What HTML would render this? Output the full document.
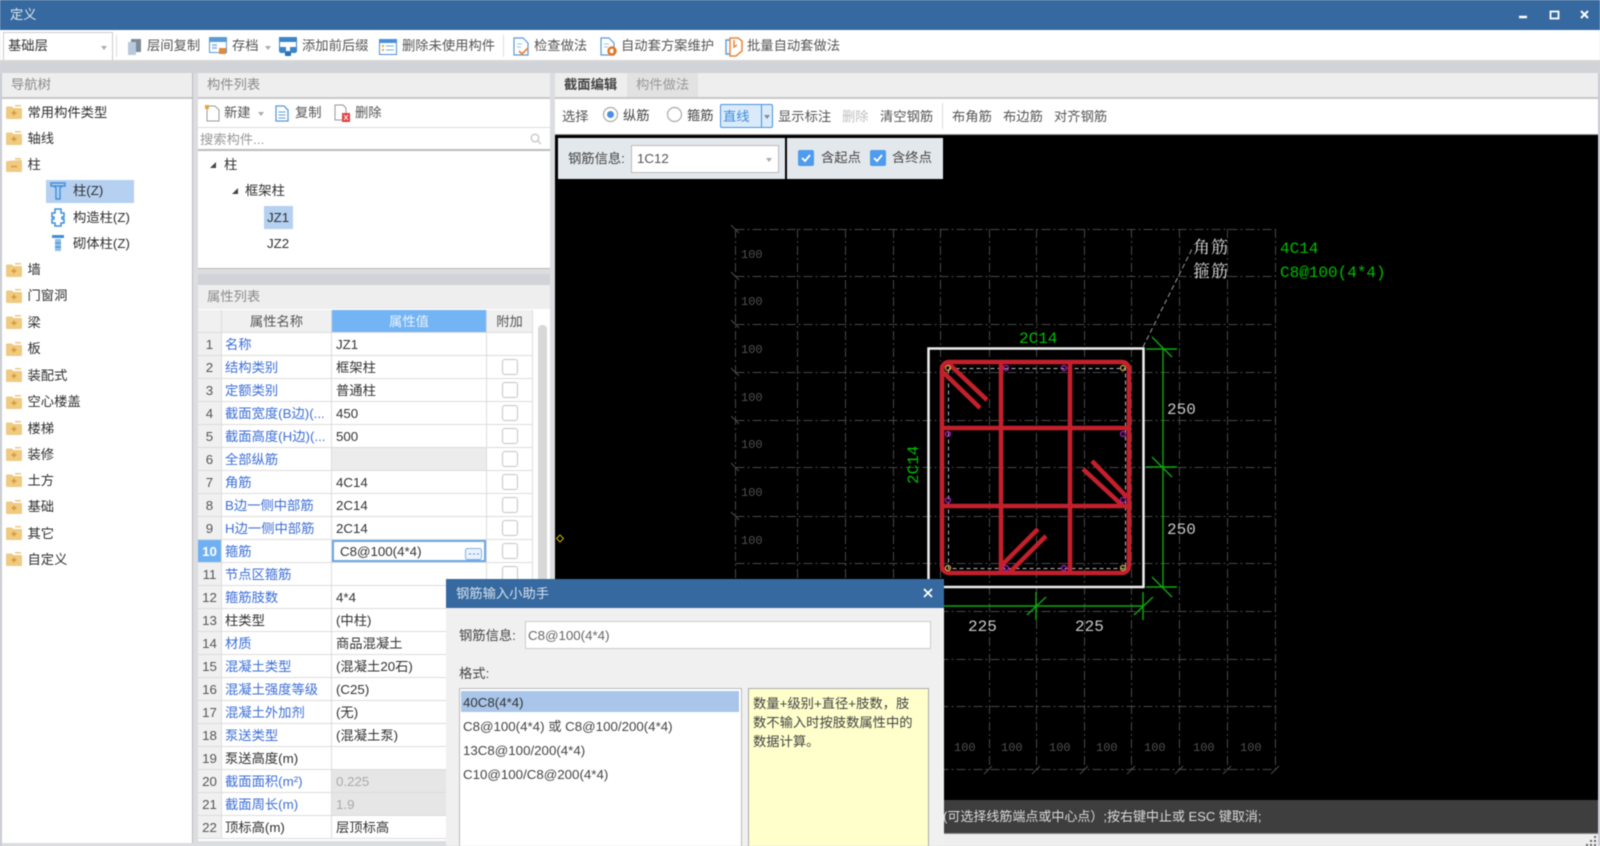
<!DOCTYPE html>
<html lang="zh"><head><meta charset="utf-8"><title>定义</title>
<style>
html,body{margin:0;padding:0;width:1600px;height:846px;overflow:hidden;background:#dcdde0}
body{font-family:"Liberation Sans","Noto Sans CJK SC",sans-serif;font-size:13.3px;color:#303030;position:relative}
#w{position:absolute;left:0;top:0;width:1600px;height:846px;overflow:hidden;filter:blur(.4px)}
.b{position:absolute}
.t{position:absolute;white-space:nowrap;line-height:18px;transform:translateY(-50%)}
.i{position:absolute;overflow:visible}
.g{color:#555}
.grid{position:absolute;left:198px;top:310px;width:335px;display:grid;grid-template-columns:24px 110px 155px 46px;grid-auto-rows:23.02px;background:#fff}
.grid div{box-sizing:border-box;border-right:1px solid #dcdcdc;border-bottom:1px solid #dcdcdc;line-height:24px;white-space:nowrap;overflow:hidden;position:relative}
.n{background:#f0f0f0;text-align:center;color:#555}
.k{color:#3d6fd6;padding-left:3px}
.k.d{color:#303030}
.v{padding-left:4px;color:#333}
.h{background:#f0f0f0;text-align:center;color:#555}
.c::after{content:"";position:absolute;left:15px;top:3px;width:14px;height:14px;border:1px solid #c4c4c4;border-radius:3px;background:#fff}
.gr{background:#ececec}
.gt{color:#aaa;background:#e6e6e6}
svg text{font-family:"Liberation Mono",monospace}
</style></head><body><div id="w">
<svg width="0" height="0" style="position:absolute"><defs>
<g id="fp"><path d="M9 1h6v1.500H9z" fill="#e8c98c"/><path d="M0 3.500q0-1 1-1h5l1.500 1.500H15q1 0 1 1V14q0 1-1 1H1q-1 0-1-1z" fill="#efca80"/><path d="M8 6.500v5M5.500 9h5" stroke="#d49a3a" stroke-width="1.400"/></g>
<g id="fm"><path d="M9 1h6v1.500H9z" fill="#e8c98c"/><path d="M0 5q0-1 1-1l14-1q1 0 1 1v10q0 1-1 1H1q-1 0-1-1z" fill="#efca80"/><path d="M5 9.500h6" stroke="#d49a3a" stroke-width="1.400"/></g>
</defs></svg>

<!-- title bar -->
<div class="b" style="left:0;top:0;width:1600px;height:29.500px;background:#36699f"></div>
<div class="t" style="left:10px;top:15px;color:#dfe7f0">定义</div>
<svg class="i" style="left:1510px;top:5px" width="90" height="20" fill="none" stroke="#fff"><path d="M9 12h8" stroke-width="2.500"/><rect x="40.500" y="6.500" width="8" height="7" stroke-width="1.800"/><path d="M71 6l7 7M78 6l-7 7" stroke-width="2"/></svg>

<!-- main toolbar -->
<div class="b" style="left:0;top:30px;width:1600px;height:31px;background:#fff"></div>
<div class="b" style="left:3px;top:32px;width:108px;height:27px;border:1px solid #ccc;background:#fff"></div>
<div class="t" style="left:8px;top:46px;color:#333">基础层</div>
<div class="b" style="left:101px;top:46px;border:3px solid transparent;border-top:4px solid #aaa"></div>
<div class="b" style="left:116px;top:35px;width:1px;height:22px;background:#ddd"></div>
<svg class="i" style="left:127px;top:38px" width="15" height="18"><path d="M4 1h10v13H4z" fill="#7d8a99"/><path d="M1 4h8v13H1z" fill="#b9c9dc"/></svg>
<div class="t g" style="left:147px;top:46px">层间复制</div>
<svg class="i" style="left:209px;top:37px" width="18" height="18"><rect x=".5" y=".5" width="17" height="15" fill="#fff" stroke="#5b9bd5"/><path d="M1 1h16v4H1z" fill="#5b9bd5"/><path d="M3 7h5v2H3zM3 10h5v2H3z" fill="#9cc3e6"/><path d="M10 11h7v6h-7z" fill="#e08a3c"/></svg>
<div class="t g" style="left:232px;top:46px">存档</div>
<div class="b" style="left:265px;top:46px;border:3px solid transparent;border-top:4px solid #aaa"></div>
<svg class="i" style="left:279px;top:37px" width="18" height="19"><rect x=".5" y=".5" width="17" height="14" fill="#fff" stroke="#3b86c8"/><path d="M1 1h16v4H1z" fill="#3b86c8"/><path d="M1 10h6v6H1zM11 10h6v6h-6z" fill="#3b86c8"/><path d="M6 15h6v4H6z" fill="#2a6fb0"/></svg>
<div class="t g" style="left:302px;top:46px">添加前后缀</div>
<svg class="i" style="left:379px;top:39px" width="18" height="16"><rect x=".5" y=".5" width="17" height="15" fill="#fff" stroke="#4a90d9"/><path d="M1 1h16v3H1z" fill="#4a90d9"/><path d="M3 6h2v2H3zM3 10h2v2H3z" fill="#e8a33d"/><path d="M7 7h8M7 11h8" stroke="#7aa9d8"/></svg>
<div class="t g" style="left:402px;top:46px">删除未使用构件</div>
<div class="b" style="left:503px;top:35px;width:1px;height:22px;background:#ddd"></div>
<svg class="i" style="left:513px;top:37px" width="16" height="19" fill="none"><path d="M1 1h9l5 5v12H1z" fill="#fff" stroke="#5b9bd5" stroke-width="1.200"/><path d="M4 7h5M4 10h4" stroke="#9cc3e6"/><path d="M6 14l3 3 6-6" stroke="#e8873c" stroke-width="1.800"/></svg>
<div class="t g" style="left:534px;top:46px">检查做法</div>
<svg class="i" style="left:600px;top:37px" width="17" height="19" fill="none"><path d="M1 1h8l5 5v12H1z" fill="#fff" stroke="#5b9bd5" stroke-width="1.200"/><path d="M4 7h5M4 10h4" stroke="#9cc3e6"/><circle cx="12" cy="14" r="3.500" stroke="#e8731c" stroke-width="2.400"/></svg>
<div class="t g" style="left:621px;top:46px">自动套方案维护</div>
<svg class="i" style="left:725px;top:37px" width="18" height="20" fill="none"><path d="M1 3h5v14H1z" stroke="#5b9bd5" stroke-width="1.400"/><path d="M5 1h8l4 3v10l-6 5H5z" fill="#fff" stroke="#e8873c" stroke-width="1.500"/><path d="M9 3v7l3-2" stroke="#e8873c" stroke-width="1.500"/></svg>
<div class="t g" style="left:747px;top:46px">批量自动套做法</div>

<!-- gray band -->
<div class="b" style="left:0;top:61px;width:1600px;height:12px;background:#d1d3d8"></div>
<div class="b" style="left:0;top:60px;width:1600px;height:2px;background:#d6d6d6"></div>

<!-- nav panel -->
<div class="b" style="left:2px;top:73px;width:190px;height:24px;background:#eeeeee;border-bottom:2px solid #c8c8c8"></div>
<div class="t" style="left:11px;top:85px;color:#8a8a8a">导航树</div>
<div class="b" style="left:2px;top:99px;width:190px;height:744px;background:#fff"></div>
<div class="b" style="left:0;top:73px;width:2px;height:773px;background:#c8ccd4"></div>
<div class="b" style="left:192px;top:73px;width:1px;height:770px;background:#bbb"></div>
<svg class="i" style="left:6px;top:104px" width="16" height="16"><use href="#fp"/></svg><div class="t" style="left:27.500px;top:112.500px">常用构件类型</div>
<svg class="i" style="left:6px;top:130px" width="16" height="16"><use href="#fp"/></svg><div class="t" style="left:27.500px;top:138.500px">轴线</div>
<svg class="i" style="left:6px;top:157px" width="16" height="16"><use href="#fm"/></svg><div class="t" style="left:27.500px;top:165px">柱</div>
<div class="b" style="left:46px;top:180px;width:87.500px;height:22.500px;background:#b5d0f0"></div>
<svg class="i" style="left:50px;top:182px" width="16" height="18" fill="none" stroke="#3f8fd8" stroke-width="1.400"><path d="M1 1h14v3H1zM4 4l2 2v11h4V6l2-2"/></svg><div class="t" style="left:73px;top:191px">柱(Z)</div>
<svg class="i" style="left:51px;top:208px" width="14" height="19" fill="none" stroke="#3f8fd8" stroke-width="1.500"><path d="M4 1h6v4h3v4h-2v2h2v4h-3v3H4v-3H1v-4h2V9H1V5h3z"/></svg><div class="t" style="left:73px;top:217.500px">构造柱(Z)</div>
<svg class="i" style="left:52px;top:235px" width="13" height="17"><path d="M0 0h12v3H0z" fill="#3f8fd8"/><path d="M3 4h6v12H3z" fill="#8fbde8"/><path d="M3 8h6M3 12h6" stroke="#3f8fd8"/></svg><div class="t" style="left:73px;top:244px">砌体柱(Z)</div>
<svg class="i" style="left:6px;top:262px" width="16" height="16"><use href="#fp"/></svg><div class="t" style="left:27.500px;top:270px">墙</div>
<svg class="i" style="left:6px;top:288px" width="16" height="16"><use href="#fp"/></svg><div class="t" style="left:27.500px;top:296px">门窗洞</div>
<svg class="i" style="left:6px;top:314px" width="16" height="16"><use href="#fp"/></svg><div class="t" style="left:27.500px;top:322.500px">梁</div>
<svg class="i" style="left:6px;top:341px" width="16" height="16"><use href="#fp"/></svg><div class="t" style="left:27.500px;top:349px">板</div>
<svg class="i" style="left:6px;top:367px" width="16" height="16"><use href="#fp"/></svg><div class="t" style="left:27.500px;top:375.500px">装配式</div>
<svg class="i" style="left:6px;top:394px" width="16" height="16"><use href="#fp"/></svg><div class="t" style="left:27.500px;top:402px">空心楼盖</div>
<svg class="i" style="left:6px;top:420px" width="16" height="16"><use href="#fp"/></svg><div class="t" style="left:27.500px;top:428.500px">楼梯</div>
<svg class="i" style="left:6px;top:446px" width="16" height="16"><use href="#fp"/></svg><div class="t" style="left:27.500px;top:454.500px">装修</div>
<svg class="i" style="left:6px;top:472px" width="16" height="16"><use href="#fp"/></svg><div class="t" style="left:27.500px;top:480.500px">土方</div>
<svg class="i" style="left:6px;top:499px" width="16" height="16"><use href="#fp"/></svg><div class="t" style="left:27.500px;top:507px">基础</div>
<svg class="i" style="left:6px;top:525px" width="16" height="16"><use href="#fp"/></svg><div class="t" style="left:27.500px;top:533.500px">其它</div>
<svg class="i" style="left:6px;top:551px" width="16" height="16"><use href="#fp"/></svg><div class="t" style="left:27.500px;top:559.500px">自定义</div>

<!-- component list -->
<div class="b" style="left:198px;top:73px;width:352px;height:24px;background:#eee;border-bottom:2px solid #c8c8c8"></div>
<div class="t" style="left:207px;top:85px;color:#8a8a8a">构件列表</div>
<div class="b" style="left:198px;top:99px;width:352px;height:28px;background:#fff"></div>
<svg class="i" style="left:204px;top:104px" width="16" height="18" fill="none"><path d="M3 2h8l4 4v11H3z" fill="#fff" stroke="#9a9a9a"/><path d="M1 1h4v4H1z" fill="#e8a33d"/></svg>
<div class="t g" style="left:224px;top:113px">新建</div>
<div class="b" style="left:258px;top:112px;border:3px solid transparent;border-top:4px solid #aaa"></div>
<svg class="i" style="left:275px;top:105px" width="14" height="17" fill="none"><path d="M1 1h8l4 4v11H1z" fill="#fff" stroke="#5b9bd5" stroke-width="1.300"/><path d="M3.500 7h7M3.500 10h7M3.500 13h7" stroke="#5b9bd5"/></svg>
<div class="t g" style="left:295px;top:113px">复制</div>
<svg class="i" style="left:334px;top:104px" width="16" height="18" fill="none"><path d="M1 1h8l3 3v12H1z" fill="#fff" stroke="#999"/><path d="M8 9h8v9H8z" fill="#e04040"/><path d="M10 11l4 5M14 11l-4 5" stroke="#fff"/></svg>
<div class="t g" style="left:355px;top:113px">删除</div>
<div class="b" style="left:198px;top:127px;width:352px;height:24px;background:#fff;border-top:1px solid #ddd;border-bottom:2px solid #bbb;box-sizing:border-box"></div>
<div class="t" style="left:200px;top:140px;color:#999">搜索构件...</div>
<svg class="i" style="left:530px;top:133px" width="12" height="12" fill="none" stroke="#ccc" stroke-width="1.500"><circle cx="5" cy="5" r="3.800"/><path d="M8 8l3 3"/></svg>
<div class="b" style="left:198px;top:151px;width:352px;height:117px;background:#fff;border-bottom:1px solid #bbb"></div>
<svg class="i" style="left:209px;top:161px" width="8" height="8"><path d="M7 1v6H1z" fill="#444"/></svg>
<div class="t" style="left:224px;top:165px">柱</div>
<svg class="i" style="left:231px;top:187px" width="8" height="8"><path d="M7 1v6H1z" fill="#444"/></svg>
<div class="t" style="left:245px;top:191px">框架柱</div>
<div class="b" style="left:264px;top:206px;width:28.500px;height:23px;background:#b5d0f0"></div>
<div class="t" style="left:267px;top:218px">JZ1</div>
<div class="t" style="left:267px;top:244px">JZ2</div>

<div class="b" style="left:198px;top:274px;width:352px;height:11px;background:#d1d3d8"></div>
<div class="b" style="left:198px;top:285px;width:352px;height:24px;background:#eee"></div>
<div class="t" style="left:207px;top:297px;color:#8a8a8a">属性列表</div>
<div class="b" style="left:198px;top:309px;width:352px;height:534px;background:#fff"></div>
<div class="b" style="left:538px;top:325px;width:9px;height:518px;background:#d8d8d8;border-radius:4px"></div>

<div class="grid">
<div class="h"></div><div class="h">属性名称</div><div class="h" style="background:#73b4f5;color:#e8f2fc">属性值</div><div class="h">附加</div>
<div class="n">1</div><div class="k">名称</div><div class="v">JZ1</div><div></div>
<div class="n">2</div><div class="k">结构类别</div><div class="v">框架柱</div><div class="c"></div>
<div class="n">3</div><div class="k">定额类别</div><div class="v">普通柱</div><div class="c"></div>
<div class="n">4</div><div class="k">截面宽度(B边)(...</div><div class="v">450</div><div class="c"></div>
<div class="n">5</div><div class="k">截面高度(H边)(...</div><div class="v">500</div><div class="c"></div>
<div class="n">6</div><div class="k">全部纵筋</div><div class="v gr"></div><div class="c"></div>
<div class="n">7</div><div class="k">角筋</div><div class="v">4C14</div><div class="c"></div>
<div class="n">8</div><div class="k">B边一侧中部筋</div><div class="v">2C14</div><div class="c"></div>
<div class="n">9</div><div class="k">H边一侧中部筋</div><div class="v">2C14</div><div class="c"></div>
<div class="n" style="background:#6fb0f2;color:#fff;font-weight:bold">10</div><div class="k">箍筋</div><div class="v" style="box-shadow:inset 0 0 0 2px #6aa8e4;padding-left:8px">C8@100(4*4)</div><div class="c"></div>
<div class="n">11</div><div class="k">节点区箍筋</div><div class="v"></div><div class="c"></div>
<div class="n">12</div><div class="k">箍筋肢数</div><div class="v">4*4</div><div class="c"></div>
<div class="n">13</div><div class="k d">柱类型</div><div class="v">(中柱)</div><div class="c"></div>
<div class="n">14</div><div class="k">材质</div><div class="v">商品混凝土</div><div class="c"></div>
<div class="n">15</div><div class="k">混凝土类型</div><div class="v">(混凝土20石)</div><div class="c"></div>
<div class="n">16</div><div class="k">混凝土强度等级</div><div class="v">(C25)</div><div class="c"></div>
<div class="n">17</div><div class="k">混凝土外加剂</div><div class="v">(无)</div><div class="c"></div>
<div class="n">18</div><div class="k">泵送类型</div><div class="v">(混凝土泵)</div><div class="c"></div>
<div class="n">19</div><div class="k d">泵送高度(m)</div><div class="v"></div><div class="c"></div>
<div class="n">20</div><div class="k">截面面积(m²)</div><div class="v gt">0.225</div><div class="c"></div>
<div class="n">21</div><div class="k">截面周长(m)</div><div class="v gt">1.9</div><div class="c"></div>
<div class="n">22</div><div class="k d">顶标高(m)</div><div class="v">层顶标高</div><div class="c"></div>
</div>
<svg class="i" style="left:465px;top:548px" width="18" height="13" fill="none"><rect x=".5" y=".5" width="16" height="11" rx="2" fill="#eaf3fc" stroke="#7fb2e5"/><path d="M4 6h2M8 6h2M12 6h2" stroke="#5a8fc8"/></svg>
<div class="b" style="left:198px;top:841px;width:352px;height:5px;background:#dcdde0"></div>

<!-- right panel -->
<div class="b" style="left:555px;top:73px;width:1043px;height:24px;background:#eee;border-bottom:2px solid #c8c8c8"></div>
<div class="b" style="left:627px;top:73px;width:71px;height:24px;background:#e2e2e2"></div>
<div class="t" style="left:564px;top:85px;color:#444;font-weight:bold">截面编辑</div>
<div class="t" style="left:636px;top:85px;color:#999">构件做法</div>
<div class="b" style="left:555px;top:99px;width:1043px;height:35px;background:#fff"></div>
<div class="t g" style="left:562px;top:116.500px">选择</div>
<svg class="i" style="left:602px;top:106px" width="18" height="18"><circle cx="8.500" cy="8.500" r="7" fill="#fff" stroke="#aaa" stroke-width="1.200"/><circle cx="8.500" cy="8.500" r="3.500" fill="#4a90e2"/></svg>
<div class="t g" style="left:623px;top:116px;color:#444">纵筋</div>
<svg class="i" style="left:666px;top:106px" width="18" height="18"><circle cx="8.500" cy="8.500" r="7" fill="#fff" stroke="#aaa" stroke-width="1.200"/></svg>
<div class="t g" style="left:687px;top:116px;color:#444">箍筋</div>
<div class="b" style="left:720px;top:104px;width:51px;height:22px;background:#d9ebfb;border:1px solid #4a90d9;border-radius:2px"></div>
<div class="b" style="left:761px;top:105px;width:1px;height:22px;background:#4a90d9"></div>
<div class="t" style="left:723px;top:117px;color:#3f8bd8">直线</div>
<div class="b" style="left:764px;top:115px;border:3px solid transparent;border-top:4px solid #888"></div>
<div class="t g" style="left:778px;top:116.500px">显示标注</div>
<div class="t" style="left:842px;top:116.500px;color:#c0c0c0">删除</div>
<div class="t g" style="left:880px;top:116.500px">清空钢筋</div>
<div class="b" style="left:942px;top:103px;width:1px;height:26px;background:#ddd"></div>
<div class="t g" style="left:952px;top:116.500px">布角筋</div>
<div class="t g" style="left:1003px;top:116.500px">布边筋</div>
<div class="t g" style="left:1054px;top:116.500px">对齐钢筋</div>

<!-- canvas -->
<div class="b" style="left:555px;top:134px;width:1043px;height:666px;background:#000;border-top:1px solid #999;box-sizing:border-box"></div>
<svg class="i" style="left:0;top:0" width="1600" height="846">
<g stroke="#484848" stroke-width="1" fill="none" stroke-dasharray="9 3 2 3">
<path d="M735.500 229.500H1275M735.500 276.500H1275M735.500 324.500H1275M735.500 372.500H1275M735.500 420.500H1275M735.500 467.500H1275M735.500 516.500H1275M735.500 563.500H1275M735.500 611.500H1275M735.500 659.500H1275M735.500 706.500H1275M735.500 769.500H1275"/>
<path d="M735.500 229V769M797.500 229V769M845.500 229V769M893.500 229V769M940.500 229V769M989.500 229V769M1036.500 229V769M1084.500 229V769M1131.500 229V769M1179.500 229V769M1227.500 229V769M1275.500 229V769"/>
</g>
<g stroke="#4a4a4a" stroke-width="1" fill="none">
<path d="M731 225l8 8M731 272l8 8M731 320l8 8M731 368l8 8M731 416l8 8M731 463l8 8M731 512l8 8"/>
<path d="M984 774l8-8M1032 774l8-8M1080 774l8-8M1127 774l8-8M1175 774l8-8M1223 774l8-8M1271 774l8-8"/>
</g>
<g fill="#4f4f4f" font-size="12">
<text x="741" y="258">100</text><text x="741" y="305">100</text><text x="741" y="353">100</text><text x="741" y="401">100</text><text x="741" y="448">100</text><text x="741" y="496">100</text><text x="741" y="544">100</text>
<text x="954" y="751">100</text><text x="1001" y="751">100</text><text x="1049" y="751">100</text><text x="1096" y="751">100</text><text x="1144" y="751">100</text><text x="1193" y="751">100</text><text x="1240" y="751">100</text>
</g>
<path d="M560 535l3.500 3.500-3.500 3.500-3.500-3.500z" fill="none" stroke="#c9b400"/>
<path d="M1143 347L1193 247" stroke="#999" stroke-dasharray="5 3" fill="none"/>
<rect x="928.500" y="348.500" width="215" height="238.500" fill="none" stroke="#eee" stroke-width="2.500"/>
<rect x="948.500" y="368.500" width="177" height="200" fill="none" stroke="#aebac6" stroke-dasharray="4 3"/>
<g stroke="#c4202c" stroke-width="4.500" fill="none">
<rect x="942" y="362" width="187" height="211" rx="7"/>
<path d="M1001 362V573M1070 362V573M942 428H1129M942 506H1129"/>
<path d="M947 362L987 400M943 372L980 408M1092 461L1127 497M1083 469L1122 505M1038 529L1001 566M1046 536L1010 572"/>
</g>
<g fill="none" stroke="#b020c0" stroke-width="1.200">
<circle cx="948" cy="434" r="2.500"/><circle cx="948" cy="500" r="2.500"/><circle cx="1006" cy="368" r="2.500"/><circle cx="1064" cy="368" r="2.500"/><circle cx="1123" cy="434" r="2.500"/><circle cx="1123" cy="500" r="2.500"/><circle cx="1006" cy="568" r="2.500"/><circle cx="1064" cy="568" r="2.500"/>
</g>
<g fill="none" stroke="#d0b040" stroke-width="1.200">
<circle cx="948" cy="368" r="2.500"/><circle cx="1123" cy="368" r="2.500"/><circle cx="948" cy="568" r="2.500"/><circle cx="1123" cy="568" r="2.500"/>
</g>
<g stroke="#10a810" stroke-width="1.400" fill="none">
<path d="M1163 349V587M1146 349H1177M1146 467H1177M1146 587H1177"/>
<path d="M1152 337L1172 357M1152 457L1172 477M1152 577L1172 597"/>
<path d="M900 606H1143M1036 592V620M1143 592V620M1027 615L1046 597M1134 615L1153 597"/>
</g>
<g fill="#00bc00" font-size="16">
<text x="1019" y="343">2C14</text>
<text x="1280" y="253">4C14</text>
<text x="1280" y="277">C8@100(4*4)</text>
<text transform="translate(918,484) rotate(-90)">2C14</text>
</g>
<g fill="#c8c8c8" font-size="16">
<text x="1167" y="414">250</text><text x="1167" y="534">250</text><text x="968" y="631">225</text><text x="1075" y="631">225</text>
</g>
<text x="1193" y="253" font-size="17" fill="#e0e0e0" style="font-family:'Noto Serif CJK SC',serif;letter-spacing:1px">角筋</text>
<text x="1193" y="277" font-size="17" fill="#e0e0e0" style="font-family:'Noto Serif CJK SC',serif;letter-spacing:1px">箍筋</text>
</svg>

<!-- rebar info panels -->
<div class="b" style="left:558px;top:138px;width:227px;height:41px;background:#e3e8ec"></div>
<div class="t" style="left:568px;top:159px;color:#444">钢筋信息:</div>
<div class="b" style="left:631px;top:145px;width:146px;height:26px;background:#fff;border:1px solid #bbb"></div>
<div class="t" style="left:637px;top:159px;color:#555">1C12</div>
<div class="b" style="left:766px;top:158px;border:3px solid transparent;border-top:4px solid #aaa"></div>
<div class="b" style="left:787px;top:138px;width:156px;height:41px;background:#e3e8ec"></div>
<svg class="i" style="left:798px;top:150px" width="16" height="16" fill="none"><rect width="16" height="16" rx="2" fill="#4f9bee"/><path d="M4 8l3 3 5-6" stroke="#fff" stroke-width="1.800"/></svg>
<div class="t" style="left:821px;top:158px;color:#444">含起点</div>
<svg class="i" style="left:870px;top:150px" width="16" height="16" fill="none"><rect width="16" height="16" rx="2" fill="#4f9bee"/><path d="M4 8l3 3 5-6" stroke="#fff" stroke-width="1.800"/></svg>
<div class="t" style="left:892px;top:158px;color:#444">含终点</div>

<!-- status bar -->
<div class="b" style="left:555px;top:800px;width:1043px;height:33px;background:#3e3e3e;border-bottom:1px solid #888"></div>
<div class="b" style="left:555px;top:834px;width:1043px;height:12px;background:#eee"></div>
<div class="t" style="left:943px;top:817px;color:#dcdcdc;font-size:13px">(可选择线筋端点或中心点）;按右键中止或 ESC 键取消;</div>
<svg class="i" style="left:1586px;top:836px" width="12" height="10" fill="#666"><path d="M8 0h2v2H8zM4 4h2v2H4zM8 4h2v2H8zM0 8h2v2H0zM4 8h2v2H4zM8 8h2v2H8z"/></svg>
<div class="b" style="left:1598px;top:73px;width:2px;height:773px;background:#c8ccd4"></div>

<!-- dialog -->
<div class="b" style="left:446px;top:579px;width:498px;height:267px;background:#f0f0f0"></div>
<div class="b" style="left:446px;top:579px;width:498px;height:29px;background:#36699f"></div>
<div class="t" style="left:456px;top:594px;color:#d5e0ec">钢筋输入小助手</div>
<svg class="i" style="left:923px;top:588px" width="11" height="11" fill="none" stroke="#fff" stroke-width="1.800"><path d="M1 1l8 8M9 1l-8 8"/></svg>
<div class="t" style="left:459px;top:636px;color:#444">钢筋信息:</div>
<div class="b" style="left:525px;top:621px;width:404px;height:26px;background:#fff;border:1px solid #ccc"></div>
<div class="t" style="left:528px;top:636px;color:#666">C8@100(4*4)</div>
<div class="t" style="left:459px;top:674px;color:#444">格式:</div>
<div class="b" style="left:459px;top:688px;width:281px;height:158px;background:#fff;border:1px solid #bbb;border-bottom:0"></div>
<div class="b" style="left:461px;top:691px;width:278px;height:21px;background:#a9c6ea"></div>
<div class="t" style="left:463px;top:703px;color:#333">40C8(4*4)</div>
<div class="t" style="left:463px;top:727px;color:#444">C8@100(4*4) 或 C8@100/200(4*4)</div>
<div class="t" style="left:463px;top:751px;color:#444">13C8@100/200(4*4)</div>
<div class="t" style="left:463px;top:775px;color:#444">C10@100/C8@200(4*4)</div>
<div class="b" style="left:748px;top:688px;width:179px;height:158px;background:#ffffcc;border:1px solid #aaa;border-bottom:0"></div>
<div class="t" style="left:753px;top:704px;color:#444">数量+级别+直径+肢数，肢</div>
<div class="t" style="left:753px;top:723px;color:#444">数不输入时按肢数属性中的</div>
<div class="t" style="left:753px;top:742px;color:#444">数据计算。</div>
</div></body></html>
